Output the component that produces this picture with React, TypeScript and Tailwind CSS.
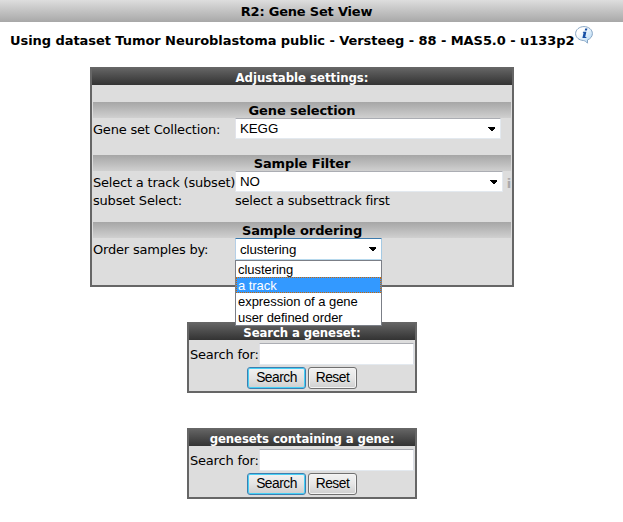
import React from "react";

const verdana = "font-['DejaVu_Sans',Verdana,sans-serif]";
const arial = "font-['Liberation_Sans',Arial,sans-serif]";

function Arrow() {
  return (
    <svg width="8" height="4" viewBox="0 0 8 4" shapeRendering="crispEdges" className="shrink-0">
      <path d="M0 0H7V2H6V3H5V4H3V3H2V2H1V1H0Z" fill="#000" />
    </svg>
  );
}

function SectionTitle({ children, className = "" }: { children: React.ReactNode; className?: string }) {
  return (
    <div className={`flex h-4 items-center justify-center bg-linear-to-b from-[#a6a6a6] to-[#d0d0d0] text-[13px] font-bold tracking-[-0.1px] ${className}`}>
      <span className="relative top-px whitespace-nowrap">{children}</span>
    </div>
  );
}

function Select({ value, className = "" }: { value: string; className?: string }) {
  return (
    <div className={`${arial} flex items-center justify-between rounded-[1px] border bg-white pr-1 pl-[4px] text-[13.33px] tracking-[-0.08px] ${className}`}>
      <span className="pt-px">{value}</span>
      <Arrow />
    </div>
  );
}

function PanelTitle({ children, className = "" }: { children: React.ReactNode; className?: string }) {
  return (
    <div className="flex h-[18px] items-center justify-center bg-linear-to-b from-[#686868] to-[#333] font-['DejaVu_Sans_Condensed','DejaVu_Sans',Tahoma,sans-serif] text-[13px] font-bold text-white font-stretch-condensed">
      <span className={`relative top-0.5 whitespace-nowrap ${className}`}>{children}</span>
    </div>
  );
}

function SearchPanel({ title, className }: { title: string; className: string }) {
  return (
    <form className={`h-[71px] w-[230px] border-x-2 border-b-2 border-[#666] bg-[#ddd] ${className}`} onSubmit={(e) => e.preventDefault()}>
      <PanelTitle className="tracking-[-0.1px]">{title}</PanelTitle>
      <div className="mt-[3px] flex h-[22px] items-center pl-px">
        <label className="w-[69px] pt-0.5 whitespace-nowrap text-[13px] tracking-[-0.2px]">Search for:</label>
        <input className="h-[22px] w-[155px] rounded-[1px] border border-t-[#abadb3] border-r-[#dbdfe6] border-b-[#e3e9ef] border-l-[#e2e3ea] bg-white outline-none" />
      </div>
      <div className={`${arial} mt-[2px] flex gap-0.5 pl-[58px] text-[13.8px] tracking-[-0.5px]`}>
        <button className="h-[22px] w-[59px] rounded-[3px] border border-[#3c7fb1] bg-linear-to-b from-[#f2f2f2] via-[#e4e4e4] to-[#cfcfcf] leading-5 shadow-[inset_0_0_0_1px_#48d0f5]">Search</button>
        <button className="h-[22px] w-[49px] rounded-[3px] border border-[#707070] bg-linear-to-b from-[#f2f2f2] via-[#e6e6e6] to-[#cfcfcf] leading-5 shadow-[inset_0_0_0_1px_#f4f4f4]">Reset</button>
      </div>
    </form>
  );
}

function InfoBubble() {
  return (
    <svg width="18" height="18" viewBox="0 0 18 18" className="shrink-0">
      <defs>
        <linearGradient id="bubble" x1="0" y1="0" x2="1" y2="1">
          <stop offset="0.3" stopColor="#fff" />
          <stop offset="1" stopColor="#a9d2f2" />
        </linearGradient>
      </defs>
      <path d="M9 .6C4.3.6.6 3.7.6 7.6c0 3.8 3.4 6.6 7.8 6.9 1.8.3 2.8 1.3 4.1 2.7V13.9c3-1.1 4.9-3.5 4.9-6.3C17.4 3.7 13.7.6 9 .6Z" fill="url(#bubble)" stroke="#86a5c4" />
      <path d="M10.2 2.6h2.2l-.5 1.9H9.7ZM8.1 5.7h3.3l-1.2 5.4h1.3l-.3 1H7.4l1.2-5.3H7.8Z" fill="#164fa5" />
    </svg>
  );
}

export default function App() {
  return (
    <main className={`${verdana} h-[522px] w-[623px] overflow-hidden bg-white text-[13px] leading-4 text-black`}>
      <header className="flex h-[22px] items-center justify-center bg-linear-to-b from-[#dedede] to-[#a8a8a8] pr-[10px] font-bold">
        <span className="relative top-px tracking-[-0.2px]">R2: Gene Set View</span>
      </header>
      <div className="flex h-[45px] items-start pt-1 pl-[10px]">
        <h1 className="w-[565px] pt-[7px] text-[13px] font-bold whitespace-nowrap tracking-[-0.06px]">Using dataset Tumor Neuroblastoma public - Versteeg - 88 - MAS5.0 - u133p2</h1>
        <InfoBubble />
      </div>

      <section className="ml-[90px] h-[220px] w-[424px] border-x-2 border-b-2 border-[#666] bg-[#ddd]">
        <PanelTitle>Adjustable settings:</PanelTitle>
        <div className="px-px pt-[17px] tracking-[-0.2px]">
          <SectionTitle>Gene selection</SectionTitle>
          <div className="flex h-[21px] items-center">
            <span className="w-[142px] pt-0.5 whitespace-nowrap">Gene set Collection:</span>
            <Select value="KEGG" className="h-[21px] w-[266px] border-t-[#abadb3] border-r-[#e3e9ef] border-b-[#e3e9ef] border-l-[#e2e3ea]" />
          </div>
          <SectionTitle className="mt-4">Sample Filter</SectionTitle>
          <div className="flex h-[21px] items-center">
            <span className="w-[142px] pt-0.5 whitespace-nowrap">Select a track (subset)</span>
            <Select value="NO" className="h-[21px] w-[268px] border-t-[#abadb3] border-r-[#e3e9ef] border-b-[#e3e9ef] border-l-[#e2e3ea]" />
            <span className="ml-[4px] pt-1 font-bold text-[#aaa]">i</span>
          </div>
          <div className="flex h-[18px] items-center">
            <span className="w-[142px]">subset Select:</span>
            <span className="tracking-[-0.23px]">select a subsettrack first</span>
          </div>
          <SectionTitle className="mt-3">Sample ordering</SectionTitle>
          <div className="flex h-[22px] items-center">
            <span className="w-[142px] pt-0.5">Order samples by:</span>
            <div className="relative">
              <Select value="clustering" className="h-[22px] w-[147px] border-t-[#3d7bad] border-r-[#a4c9e3] border-b-[#b7d9ed] border-l-[#b5cfe7]" />
              <ul className={`${arial} absolute top-[22px] left-0 z-10 h-[66px] w-[147px] border border-[#7b7f87] bg-white text-[13px] leading-4 tracking-[-0.05px]`}>
                <li className="h-4 pt-px pl-0.5">clustering</li>
                <li className="h-4 border border-dotted border-[#cc6600] bg-[#3399ff] pl-px leading-[15px] text-white">a track</li>
                <li className="h-4 pt-px pl-0.5">expression of a gene</li>
                <li className="h-4 pt-px pl-0.5">user defined order</li>
              </ul>
            </div>
          </div>
        </div>
      </section>

      <SearchPanel title="Search a geneset:" className="mt-[35px] ml-[187px]" />
      <SearchPanel title="genesets containing a gene:" className="mt-[35px] ml-[187px]" />
    </main>
  );
}
